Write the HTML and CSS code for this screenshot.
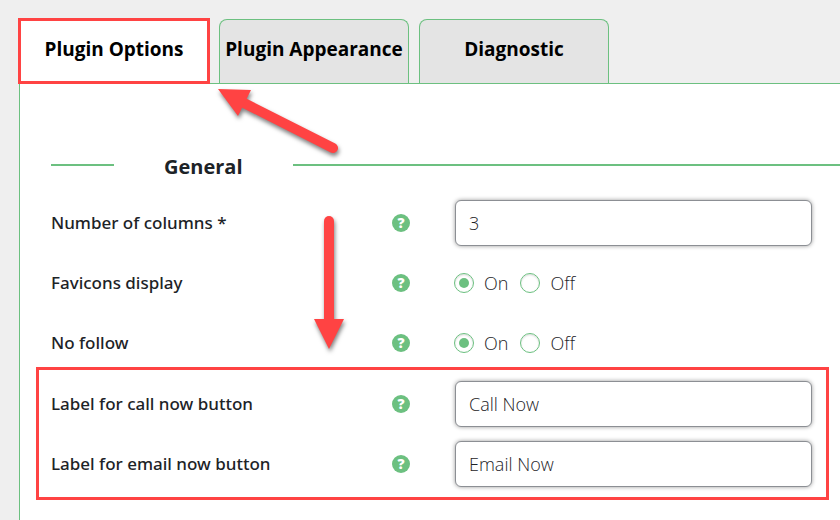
FILE: index.html
```
<!DOCTYPE html>
<html lang="en">
<head>
  <meta charset="utf-8">
  <title>Plugin Options</title>
  <link rel="stylesheet" href="styles.css">
</head>
<body>
  <div class="tabs">
    <button type="button" class="tab active">Plugin Options</button>
    <button type="button" class="tab">Plugin Appearance</button>
    <button type="button" class="tab">Diagnostic</button>
  </div>

  <form class="panel">
    <h2 class="section-title">General</h2>

    <div class="row">
      <label class="name" for="columns">Number of columns *</label>
      <button type="button" class="help" aria-label="Help">?</button>
      <input class="text-field" type="text" id="columns" value="3">
    </div>
    <div class="row" role="radiogroup" aria-labelledby="favicons-name">
      <span class="name" id="favicons-name">Favicons display</span>
      <button type="button" class="help" aria-label="Help">?</button>
      <div class="choices">
        <label class="choice"><input type="radio" name="favicons" checked>On</label>
        <label class="choice"><input type="radio" name="favicons">Off</label>
      </div>
    </div>
    <div class="row" role="radiogroup" aria-labelledby="nofollow-name">
      <span class="name" id="nofollow-name">No follow</span>
      <button type="button" class="help" aria-label="Help">?</button>
      <div class="choices">
        <label class="choice"><input type="radio" name="nofollow" checked>On</label>
        <label class="choice"><input type="radio" name="nofollow">Off</label>
      </div>
    </div>

    <div class="highlight">
      <div class="row">
        <label class="name" for="call-label">Label for call now button</label>
        <button type="button" class="help" aria-label="Help">?</button>
        <input class="text-field" type="text" id="call-label" value="Call Now">
      </div>
      <div class="row">
        <label class="name" for="email-label">Label for email now button</label>
        <button type="button" class="help" aria-label="Help">?</button>
        <input class="text-field" type="text" id="email-label" value="Email Now">
      </div>
    </div>
  </form>

  <!-- Arrows pointing at the tab and at the highlighted rows -->
  <svg class="arrows" width="400" height="380" viewBox="0 0 400 380" aria-hidden="true">
    <g class="arrow">
      <path d="M333 148 L242 102" />
      <polygon points="218,89 251,90 238,116" />
    </g>
    <g class="arrow">
      <path d="M329 221 V322" />
      <polygon points="314,319 344,319 329,349" />
    </g>
  </svg>
</body>
</html>
```

FILE: styles.css
```
* {
  box-sizing: border-box;
}

body {
  margin: 0;
  padding: 19px 0 0 19px;
  background: #efefef;
  font-family: "Noto Sans", "Open Sans", sans-serif;
  font-size: 17px;
  line-height: 24px;
  color: #1d2327;
  overflow: hidden;
}

button,
input {
  font: inherit;
  color: inherit;
}

/* Tabs */
.tabs {
  display: flex;
  gap: 10px;
}

.tab {
  width: 190px;
  height: 64px;
  padding: 0 0 6px;
  border: 1px solid #6cc080;
  border-bottom: 0;
  border-radius: 8px 8px 0 0;
  background: #e4e4e4;
  color: #000;
  font-family: "Open Sans", "Noto Sans", sans-serif;
  font-size: 19px;
  font-weight: 700;
  white-space: nowrap;
  cursor: pointer;
}

.tab.active {
  z-index: 1;
  border-color: #fff;
  border-radius: 0;
  background: #fff;
  outline: 3px solid #ff4343;
  outline-offset: -2px;
}

/* Settings panel */
.panel {
  min-height: calc(100vh - 83px);
  padding: 69px 28px 20px 31px;
  border: 1px solid #6cc080;
  border-right: 0;
  background: #fff;
}

.section-title {
  display: flex;
  align-items: center;
  gap: 50px;
  margin: 0 -28px 12px 0;
  font-family: "Open Sans", "Noto Sans", sans-serif;
  font-size: 20px;
  line-height: 28px;
  font-weight: 700;
}

.section-title::before,
.section-title::after {
  content: "";
  height: 2px;
  margin-bottom: 4px;
  background: #6cc080;
}

.section-title::before {
  width: 63px;
}

.section-title::after {
  flex: 1;
}

.row {
  display: flex;
  align-items: center;
  height: 60px;
}

.name {
  width: 341px;
  font-weight: 500;
}

.help {
  width: 18px;
  height: 18px;
  margin-right: 45px;
  padding: 0;
  border: 0;
  border-radius: 50%;
  background: #6cc080;
  color: #fff;
  font-family: "Open Sans", "Noto Sans", sans-serif;
  font-size: 14px;
  font-weight: 800;
  line-height: 18px;
  cursor: pointer;
}

.text-field {
  flex: 1;
  min-width: 0;
  height: 46px;
  padding: 0 13px;
  border: 1px solid #8c8f94;
  border-radius: 6px;
  background: #fff;
  font-family: "Open Sans", "Noto Sans", sans-serif;
  font-size: 18px;
  font-weight: 300;
  box-shadow: 0 0 4px rgba(0, 0, 0, 0.4);
}

.choices {
  display: flex;
  gap: 12px;
  margin-left: -1px;
}

.choice {
  display: flex;
  align-items: center;
  gap: 10px;
  font-family: "Open Sans", "Noto Sans", sans-serif;
  font-size: 18px;
  font-weight: 300;
}

.choice input {
  display: grid;
  place-items: center;
  width: 20px;
  height: 20px;
  margin: 0;
  border: 1px solid #6cc080;
  border-radius: 50%;
  background: #fff;
  box-shadow: inset 0 1px 2px rgba(0, 0, 0, 0.15);
  appearance: none;
}

.choice input:checked::before {
  content: "";
  width: 10px;
  height: 10px;
  border-radius: 50%;
  background: #6cc080;
}

/* Red frame and arrows */
.highlight {
  margin: -6px -17px 0 -15px;
  padding: 4px 14px 3px 12px;
  border: 3px solid #ff4343;
}

.arrows {
  position: absolute;
  top: 0;
  left: 0;
  pointer-events: none;
}

.arrow {
  filter: drop-shadow(1px 3px 2px rgba(0, 0, 0, 0.5));
}

.arrow path {
  fill: none;
  stroke: #ff4343;
  stroke-width: 10;
  stroke-linecap: round;
}

.arrow polygon {
  fill: #ff4343;
}
```
